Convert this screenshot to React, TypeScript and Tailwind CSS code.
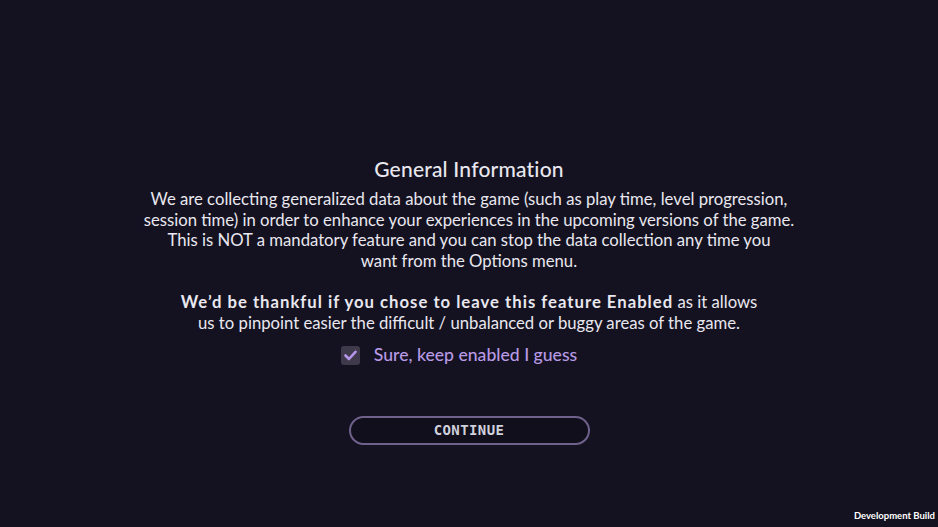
export default function App() {
  return (
    <div
      className="relative flex h-[527px] w-full flex-col items-center bg-[#141220] text-[#e9e7ef]"
      style={{ fontFamily: "Lato, 'Noto Sans', sans-serif" }}
    >
      <h1 className="mt-[157px] text-[21px] leading-[24px] font-medium tracking-[0.2px]">General Information</h1>
      <p className="mt-[8px] text-center text-[16.7px] leading-[20.5px]">
        We are collecting generalized data about the game (such as play time, level progression,
        <br />
        session time) in order to enhance your experiences in the upcoming versions of the game.
        <br />
        This is NOT a mandatory feature and you can stop the data collection any time you
        <br />
        want from the Options menu.
      </p>
      <p className="mt-[21px] text-center text-[16.7px] leading-[20.5px]">
        <span className="font-bold tracking-[1px]">We’d be thankful if you chose to leave this feature Enabled</span> as it allows
        <br />
        us to pinpoint easier the difficult / unbalanced or buggy areas of the game.
      </p>
      <label className="mt-[12px] flex h-[20px] items-center gap-[14px] pr-[20px]">
        <span className="flex h-[19px] w-[19px] items-center justify-center rounded-[3px] bg-[#3e3a4c]">
          <svg width="13" height="11" viewBox="0 0 13 11" fill="none">
            <path d="M1.5 5.5 L5 9 L11.5 1.8" stroke="#b694e8" strokeWidth="2.6" strokeLinecap="round" strokeLinejoin="round" />
          </svg>
        </span>
        <span className="text-[17.6px] font-medium text-[#b89ae6]">Sure, keep enabled I guess</span>
      </label>
      <button className="mt-[51px] flex h-[29px] w-[241px] items-center justify-center rounded-full border-2 border-[#6f618b] bg-[#110f1b]">
        <span
          className="text-[14px] font-bold tracking-[0.4px] text-[#cfd1dd]"
          style={{ fontFamily: "'DejaVu Sans Mono', monospace" }}
        >
          CONTINUE
        </span>
      </button>
      <span className="absolute right-[3px] bottom-[4px] text-[9.5px] font-bold text-white">Development Build</span>
    </div>
  );
}
